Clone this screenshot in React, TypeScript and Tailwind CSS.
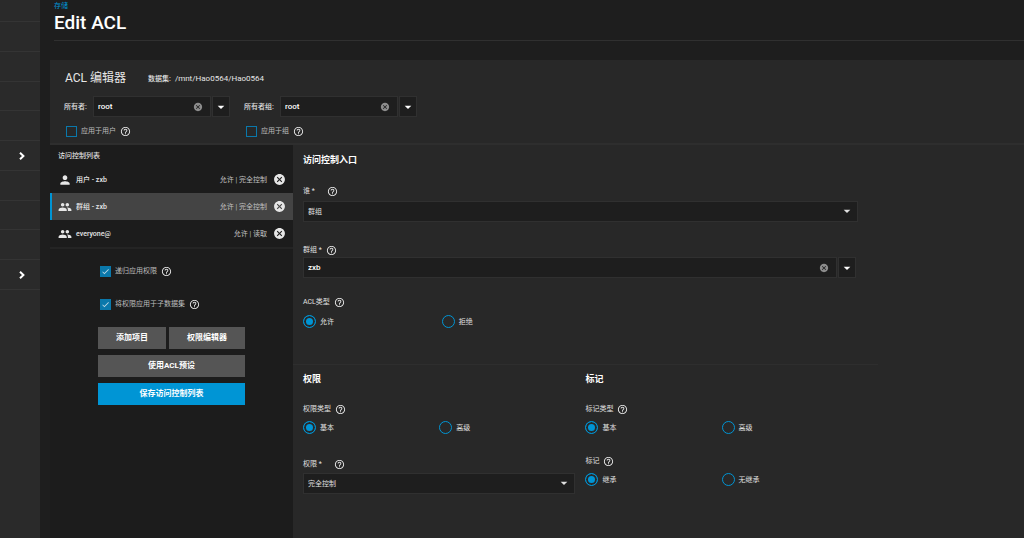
import { useState } from "react";
import type { ReactNode } from "react";
import { MdArrowDropDown, MdCancel, MdCheck, MdHelpOutline, MdPeople, MdPerson } from "react-icons/md";

const navRows = [false, false, false, false, true, false, false, false, true];

const entries = [
  { who: "用户 - zxb", access: "允许 | 完全控制", group: false },
  { who: "群组 - zxb", access: "允许 | 完全控制", group: true },
  { who: "everyone@", access: "允许 | 读取", group: true },
];

function Help() {
  return <MdHelpOutline className="size-[11px] shrink-0 text-[#e6e6e6]" />;
}

function Label({ htmlFor, gap, children }: { htmlFor?: string; gap?: boolean; children: ReactNode }) {
  return (
    <div className={gap ? "flex h-[12px] items-center gap-3" : "flex h-[12px] items-center gap-1"}>
      <label htmlFor={htmlFor}>{children}</label>
      <Help />
    </div>
  );
}

function Check({ id, label, defaultChecked }: { id: string; label: string; defaultChecked?: boolean }) {
  return (
    <div className="flex h-[12px] items-center gap-1">
      <span className="relative flex size-[11px] shrink-0">
        <input id={id} type="checkbox" defaultChecked={defaultChecked}
          className="peer size-[11px] appearance-none border border-[#0a78ab] checked:bg-[#0a78ab]" />
        <MdCheck className="pointer-events-none invisible absolute inset-0 size-[11px] p-px text-[#b9d6e4] peer-checked:visible" />
      </span>
      <label htmlFor={id} className="text-[#bcbcbc]">{label}</label>
      <Help />
    </div>
  );
}

function Combo({ id, value, wide }: { id: string; value: string; wide?: boolean }) {
  const [text, setText] = useState(value);
  return (
    <div className={wide ? "flex gap-px pr-[2px]" : "flex gap-px"}>
      <div className={wide ? "flex h-[21px] flex-1 items-center border border-[#303030] bg-[#1e1e1e] pr-[7px]" : "flex h-[21px] w-[118px] items-center border border-[#303030] bg-[#1e1e1e] pr-[7px]"}>
        <input id={id} value={text} onChange={(e) => setText(e.target.value)}
          className="min-w-0 flex-1 bg-transparent pl-1 text-[8px] font-medium text-white outline-none" />
        <button aria-label="清除" onClick={() => setText("")}><MdCancel className="size-[10px] text-[#8c8c8c]" /></button>
      </div>
      <button aria-label="展开" className="flex h-[21px] w-[18px] items-center justify-center border border-[#303030] bg-[#1e1e1e]">
        <MdArrowDropDown className="size-[16px] text-white" />
      </button>
    </div>
  );
}

function Select({ id, options }: { id: string; options: string[] }) {
  return (
    <div className="relative">
      <select id={id} className="h-[21px] w-full appearance-none border border-[#303030] bg-[#1e1e1e] pl-1 text-[#e0e0e0] outline-none">
        {options.map((o) => <option key={o}>{o}</option>)}
      </select>
      <MdArrowDropDown className="pointer-events-none absolute top-[2px] right-[3px] size-[16px] text-[#e0e0e0]" />
    </div>
  );
}

function Radios({ name, options, wide }: { name: string; options: string[]; wide?: boolean }) {
  const [value, setValue] = useState(options[0]);
  return (
    <div className={wide ? "grid grid-cols-4" : "grid grid-cols-2"}>
      {options.map((o) => (
        <label key={o} className="flex h-[13px] items-center gap-1">
          <input type="radio" name={name} checked={value === o} onChange={() => setValue(o)}
            className="size-[13px] appearance-none rounded-full border border-[#0095d5] checked:bg-[#0095d5] checked:shadow-[inset_0_0_0_2px_#282828]" />
          {o}
        </label>
      ))}
    </div>
  );
}

export default function App() {
  const [selected, setSelected] = useState(1);

  return (
    <div className="flex min-h-screen bg-[#1e1e1e] font-['Roboto','Noto_Sans_CJK_SC',sans-serif] text-[7px] leading-[10px] text-[#e0e0e0]">
      <nav className="w-10 shrink-0 bg-[#2a2a2a]">
        <div className="h-[22px] border-b border-[#343434]" />
        <div className="flex h-[268px] flex-col">
          {navRows.map((open, i) => (
            <div key={i} className="flex flex-1 items-center justify-end border-b border-[#343434] pr-[14px]">
              {open && (
                <svg viewBox="0 0 8 10" className="h-[10px] w-2 fill-none stroke-white stroke-2">
                  <path d="M2 1.8 5.4 5 2 8.2" />
                </svg>
              )}
            </div>
          ))}
        </div>
      </nav>

      <div className="flex min-w-0 flex-1 flex-col">
        <header className="ml-[14px] h-[41px] border-b border-[#303030]">
          <a href="#" className="block pt-px text-[#0095d5]">存储</a>
          <h1 className="text-[19px] leading-[24px] font-medium text-white">Edit ACL</h1>
        </header>

        <main className="mt-[19px] ml-[10px] flex flex-1 flex-col bg-[#282828]">
          <section className="border-b-2 border-[#2e2e2e] pl-[14px]">
            <div className="flex h-[36px] items-center gap-[22px] pl-px">
              <h2 className="text-[12px] text-[#e6e6e6]">ACL 编辑器</h2>
              <p className="flex items-center gap-1 pt-[2px] text-[#e6e6e6]">
                <span className="font-medium">数据集:</span><span className="text-[8px]">/mnt/Hao0564/Hao0564</span>
              </p>
            </div>
            <div className="flex gap-[14px]">
              <div>
                <div className="flex items-center gap-1">
                  <label htmlFor="owner" className="w-[25px] font-medium">所有者:</label>
                  <Combo id="owner" value="root" />
                </div>
                <div className="pt-[8px] pb-[6px] pl-[2px]"><Check id="apply-user" label="应用于用户" /></div>
              </div>
              <div>
                <div className="flex items-center gap-1">
                  <label htmlFor="owner-group" className="w-[32px] font-medium">所有者组:</label>
                  <Combo id="owner-group" value="root" />
                </div>
                <div className="pt-[8px] pb-[6px] pl-[2px]"><Check id="apply-group" label="应用于组" /></div>
              </div>
            </div>
          </section>

          <div className="flex flex-1">
            <aside className="w-[243px] shrink-0 bg-[#1c1c1c]">
              <h3 className="h-[21px] pt-[6px] pl-2 font-medium">访问控制列表</h3>
              <ul className="border-b-2 border-[#242424]">
                {entries.map((e, i) => (
                  <li key={e.who} onClick={() => setSelected(i)}
                    className={i === selected ? "flex h-[27px] items-center border-l-2 border-[#0095d5] bg-[#444444] pr-[7px] pl-[6px]" : "flex h-[27px] items-center border-l-2 border-transparent pr-[7px] pl-[6px]"}>
                    {e.group ? <MdPeople className="size-[14px] text-[#e6e6e6]" /> : <MdPerson className="size-[14px] text-[#e6e6e6]" />}
                    <span className="ml-1 flex-1 font-medium text-[#e6e6e6]">{e.who}</span>
                    <span className="text-[#c0c0c0]">{e.access}</span>
                    <button aria-label="删除" className="ml-[6px]"><MdCancel className="size-[13px] text-[#e6e6e6]" /></button>
                  </li>
                ))}
              </ul>

              <div className="space-y-[21px] pt-[16px] pl-[50px]">
                <Check id="recursive" label="递归应用权限" defaultChecked />
                <Check id="traverse" label="将权限应用于子数据集" defaultChecked />
              </div>

              <div className="mt-[17px] ml-[48px] flex w-[147px] flex-wrap gap-x-[3px] gap-y-[6px] text-[8px] font-bold text-white">
                <button className="h-[22px] w-[68px] bg-[#555555]">添加项目</button>
                <button className="h-[22px] flex-1 bg-[#555555]">权限编辑器</button>
                <button className="h-[22px] w-full bg-[#555555]">使用ACL预设</button>
                <button className="h-[22px] w-full bg-[#0095d5]">保存访问控制列表</button>
              </div>
            </aside>

            <div className="min-w-0 flex-1">
              <div className="w-4/5">
                <section className="h-[220px] border-b border-[#2e2e2e] pt-[9px] pr-5 pl-[10px]">
                  <h3 className="text-[9px] leading-[12px] font-bold text-white">访问控制入口</h3>
                  <div className="pt-[19px]"><Label htmlFor="who" gap>谁 *</Label></div>
                  <div className="pt-[4px]"><Select id="who" options={["群组", "用户"]} /></div>
                  <div className="pt-[22px]"><Label htmlFor="group">群组 *</Label></div>
                  <div className="pt-px"><Combo id="group" value="zxb" wide /></div>
                  <div className="pt-[18px]"><Label>ACL类型</Label></div>
                  <div className="pt-[7px]"><Radios name="acl-type" options={["允许", "拒绝"]} wide /></div>
                </section>

                <div className="grid grid-cols-2 gap-[10px] pt-[8px] pr-5 pl-[10px]">
                  <section>
                    <h3 className="text-[9px] leading-[12px] font-bold text-white">权限</h3>
                    <div className="pt-[18px] pb-[6px]"><Label>权限类型</Label></div>
                    <Radios name="perm-type" options={["基本", "高级"]} />
                    <div className="pt-[24px] pb-[3px]"><Label htmlFor="perm" gap>权限 *</Label></div>
                    <Select id="perm" options={["完全控制", "读取"]} />
                  </section>
                  <section>
                    <h3 className="text-[9px] leading-[12px] font-bold text-white">标记</h3>
                    <div className="pt-[18px] pb-[6px]"><Label>标记类型</Label></div>
                    <Radios name="flag-type" options={["基本", "高级"]} />
                    <div className="pt-[21px] pb-[6px]"><Label>标记</Label></div>
                    <Radios name="flags" options={["继承", "无继承"]} />
                  </section>
                </div>
              </div>
            </div>
          </div>
        </main>
      </div>
    </div>
  );
}
